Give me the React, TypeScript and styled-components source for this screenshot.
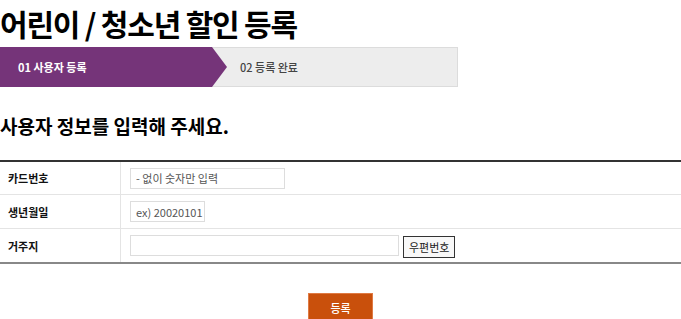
import styled, { createGlobalStyle } from 'styled-components';

const GlobalStyle = createGlobalStyle`
  body {
    margin: 0;
    background: #fff;
    font-family: 'Noto Sans CJK KR', 'Noto Sans', sans-serif;
    color: #111;
  }
`;

const Page = styled.div`
  width: 681px;
`;

const Title = styled.h1`
  margin: 0;
  padding-top: 3px;
  font-size: 30px;
  font-weight: 700;
  line-height: 40px;
  letter-spacing: -1.2px;
  color: #000;
`;

const Stepper = styled.ol`
  display: flex;
  width: 458px;
  height: 40px;
  margin: 4px 0 0;
  padding: 0;
  list-style: none;
  box-sizing: border-box;
  background: #ededed;
  border: 1px solid #dcdcdc;
  border-left: none;
`;

const Step = styled.li<{ $active?: boolean }>`
  position: relative;
  display: flex;
  align-items: center;
  box-sizing: border-box;
  width: ${({ $active }) => ($active ? '212px' : 'auto')};
  height: 100%;
  padding-left: ${({ $active }) => ($active ? '18px' : '28px')};
  font-size: 11px;
  font-weight: ${({ $active }) => ($active ? 700 : 500)};
  color: ${({ $active }) => ($active ? '#fff' : '#444')};
  background: ${({ $active }) => ($active ? '#753479' : 'transparent')};
  ${({ $active }) =>
    $active &&
    `
    margin: -1px 0;
    height: 40px;
    &::after {
      content: '';
      position: absolute;
      top: 0;
      right: -15px;
      border-top: 20px solid transparent;
      border-bottom: 20px solid transparent;
      border-left: 15px solid #753479;
    }
  `}
`;

const Subtitle = styled.h2`
  margin: 27px 0 0;
  font-size: 19px;
  font-weight: 700;
  line-height: 24px;
  color: #000;
`;

const Form = styled.div`
  margin-top: 22px;
  border-top: 2px solid #333;
  border-bottom: 2px solid #888;
`;

const Row = styled.div`
  display: flex;
  height: 32px;
  box-sizing: border-box;
  & + & {
    height: 34px;
    border-top: 1px solid #e4e4e4;
  }
`;

const Label = styled.div`
  display: flex;
  align-items: center;
  width: 121px;
  padding-left: 8px;
  box-sizing: border-box;
  border-right: 1px solid #e4e4e4;
  font-size: 11px;
  font-weight: 700;
  color: #111;
`;

const Field = styled.div`
  display: flex;
  align-items: center;
  gap: 4px;
  padding-left: 9px;
`;

const Input = styled.input<{ $width: number }>`
  width: ${({ $width }) => $width}px;
  height: 21px;
  box-sizing: border-box;
  padding: 0 0 0 5px;
  border: 1px solid #dddddd;
  font-family: inherit;
  font-size: 11px;
  color: #333;
  outline: none;
  &::placeholder {
    color: #555;
    opacity: 1;
  }
`;

const ZipButton = styled.button`
  height: 22px;
  padding: 0 5px;
  margin-top: 3px;
  box-sizing: border-box;
  border: 1px solid #333;
  background: #f8f8f8;
  font-family: inherit;
  font-size: 11px;
  color: #222;
`;

const Actions = styled.div`
  display: flex;
  justify-content: center;
  margin-top: 29px;
`;

const Submit = styled.button`
  width: 65px;
  height: 30px;
  border: 1px solid #e07a43;
  background: #c9500c;
  color: #fff;
  font-family: inherit;
  font-size: 11px;
  font-weight: 500;
`;

export default function App() {
  return (
    <Page>
      <GlobalStyle />
      <Title>어린이 / 청소년 할인 등록</Title>
      <Stepper>
        <Step $active>01 사용자 등록</Step>
        <Step>02 등록 완료</Step>
      </Stepper>
      <Subtitle>사용자 정보를 입력해 주세요.</Subtitle>
      <Form>
        <Row>
          <Label>카드번호</Label>
          <Field>
            <Input $width={155} placeholder="- 없이 숫자만 입력" />
          </Field>
        </Row>
        <Row>
          <Label>생년월일</Label>
          <Field>
            <Input $width={75} placeholder="ex) 20020101" />
          </Field>
        </Row>
        <Row>
          <Label>거주지</Label>
          <Field>
            <Input $width={269} />
            <ZipButton>우편번호</ZipButton>
          </Field>
        </Row>
      </Form>
      <Actions>
        <Submit>등록</Submit>
      </Actions>
    </Page>
  );
}
